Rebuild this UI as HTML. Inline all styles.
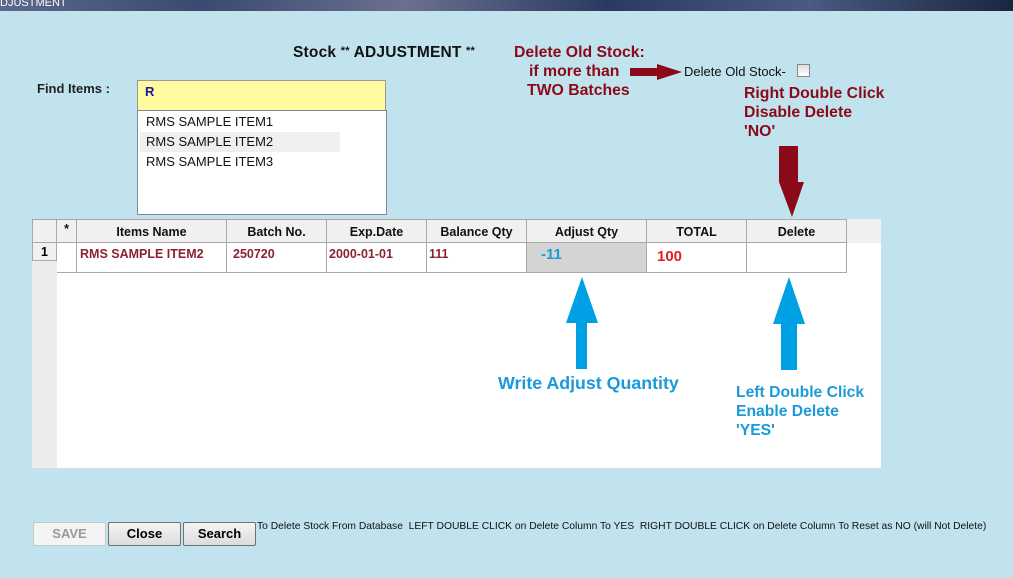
<!DOCTYPE html>
<html><head><style>
*{margin:0;padding:0;box-sizing:border-box}
body{width:1013px;height:578px;background:#c0e3ed;font-family:"Liberation Sans",Arial,sans-serif;position:relative;overflow:hidden}
.a{position:absolute;white-space:nowrap}
.tb{left:0;top:0;width:1013px;height:12px;background:linear-gradient(90deg,#5a6a8a,#3a4a70 20%,#6a7090 40%,#2a3a60 60%,#4a5a80 80%,#1a2540);border-bottom:1px solid #d0dde8}
.red{color:#8b0a1a;font-weight:bold;font-size:15.8px;line-height:19px}
.blue{color:#1a9ad8;font-weight:bold}
.cell{position:absolute;border-right:1px solid #a8a8a8;border-bottom:1px solid #a8a8a8;font-size:12.5px}
.h{top:219px;height:24px;background:#f0f0f0;font-weight:bold;text-align:center;line-height:24px;color:#111}
.d{top:243px;height:30px;background:#fff;color:#8b2232;font-weight:bold;padding-left:6px;line-height:22px}
.btn{position:absolute;top:522px;height:24px;border:1px solid #707070;border-radius:2px;background:linear-gradient(#f4f4f4,#dcdcdc);font-weight:bold;font-size:13px;text-align:center;line-height:22px}
</style></head><body>
<div class="a tb"></div>
<div class="a" style="left:0;top:-3px;font-size:11px;color:#fff">DJUSTMENT</div>
<div class="a" style="left:293px;top:44px;font-size:15.5px;font-weight:bold;color:#111;letter-spacing:0.2px">Stock <span style="font-size:11px;vertical-align:3px">**</span> ADJUSTMENT <span style="font-size:11px;vertical-align:3px">**</span></div>
<div class="a red" style="left:514px;top:43px">Delete Old Stock:</div>
<div class="a red" style="left:529px;top:62px">if more than</div>
<div class="a red" style="left:527px;top:81px">TWO Batches</div>
<svg class="a" style="left:628px;top:62px" width="56" height="20"><path d="M2 6h27v-4l25 8-25 8v-4H2z" fill="#8b0a1a"/></svg>
<div class="a" style="left:684px;top:64px;font-size:13px;color:#111">Delete Old Stock-</div>
<div class="a" style="left:797px;top:64px;width:13px;height:13px;border:1px solid #888;background:linear-gradient(#ddd,#fff)"></div>
<div class="a red" style="left:744px;top:84px">Right Double Click</div>
<div class="a red" style="left:744px;top:103px">Disable Delete</div>
<div class="a red" style="left:744px;top:122px">'NO'</div>
<svg class="a" style="left:778px;top:146px" width="28" height="72"><path d="M1 0h19v36h6l-12 35L1 36z" fill="#8b0a1a"/></svg>
<div class="a" style="left:37px;top:81px;font-size:13px;font-weight:bold;color:#222">Find Items :</div>
<div class="a" style="left:137px;top:80px;width:249px;height:30px;background:#fffaa0;border:1px solid #999;border-bottom:none"></div>
<div class="a" style="left:145px;top:84px;font-size:13px;font-weight:bold;color:#1a1a90">R</div>
<div class="a" style="left:137px;top:110px;width:250px;height:105px;background:#fff;border:1px solid #7a8a9a"></div>
<div class="a" style="left:140px;top:132px;width:200px;height:20px;background:#efefef"></div>
<div class="a" style="left:146px;top:112px;font-size:13px;color:#111;line-height:20px">RMS SAMPLE ITEM1<br>RMS SAMPLE ITEM2<br>RMS SAMPLE ITEM3</div>
<div class="a" style="left:32px;top:219px;width:849px;height:249px;background:#fff"></div>
<div class="a" style="left:32px;top:219px;width:849px;height:24px;background:#f0f0f0"></div>
<div class="a" style="left:32px;top:243px;width:25px;height:225px;background:#ececec"></div>
<div class="cell h" style="left:32px;width:25px;border-left:1px solid #a8a8a8;border-top:1px solid #a8a8a8"></div>
<div class="cell h" style="left:57px;width:20px;border-top:1px solid #a8a8a8;line-height:18px">*</div>
<div class="cell h" style="left:77px;width:150px;border-top:1px solid #a8a8a8">Items Name</div>
<div class="cell h" style="left:227px;width:100px;border-top:1px solid #a8a8a8">Batch No.</div>
<div class="cell h" style="left:327px;width:100px;border-top:1px solid #a8a8a8">Exp.Date</div>
<div class="cell h" style="left:427px;width:100px;border-top:1px solid #a8a8a8">Balance Qty</div>
<div class="cell h" style="left:527px;width:120px;border-top:1px solid #a8a8a8">Adjust Qty</div>
<div class="cell h" style="left:647px;width:100px;border-top:1px solid #a8a8a8">TOTAL</div>
<div class="cell h" style="left:747px;width:100px;border-top:1px solid #a8a8a8">Delete</div>
<div class="cell" style="left:32px;top:243px;width:25px;height:18px;background:#f0f0f0;border-left:1px solid #a8a8a8;font-weight:bold;text-align:center;line-height:18px">1</div>
<div class="cell d" style="left:57px;width:20px"></div>
<div class="cell d" style="left:77px;width:150px;padding-left:3px">RMS SAMPLE ITEM2</div>
<div class="cell d" style="left:227px;width:100px">250720</div>
<div class="cell d" style="left:327px;width:100px;padding-left:2px">2000-01-01</div>
<div class="cell d" style="left:427px;width:100px;padding-left:2px">111</div>
<div class="cell d" style="left:527px;width:120px;background:#d4d4d4;color:#1a9ad8;font-size:15px;padding-left:14px;line-height:24px">-11</div>
<div class="cell d" style="left:647px;width:100px;color:#e02020;font-size:15px;padding-left:10px;line-height:28px">100</div>
<div class="cell d" style="left:747px;width:100px"></div>
<svg class="a" style="left:565px;top:276px" width="36" height="96"><path d="M17 1L33 47h-11v46H11V47H1z" fill="#00a0e4"/></svg>
<svg class="a" style="left:771px;top:276px" width="36" height="96"><path d="M18 1L34 48h-8v46H10V48H2z" fill="#00a0e4"/></svg>
<div class="a blue" style="left:498px;top:373px;font-size:17.8px">Write Adjust Quantity</div>
<div class="a blue" style="left:736px;top:383px;font-size:15.7px;line-height:19px">Left Double Click<br>Enable Delete<br>'YES'</div>
<div class="btn" style="left:33px;width:73px;color:#999;border-color:#c8c8c8;background:#f4f4f4">SAVE</div>
<div class="btn" style="left:108px;width:73px">Close</div>
<div class="btn" style="left:183px;width:73px">Search</div>
<div class="a" style="left:257px;top:521px;font-size:10.3px;color:#111">To Delete Stock From Database&nbsp; LEFT DOUBLE CLICK on Delete Column To YES&nbsp; RIGHT DOUBLE CLICK on Delete Column To Reset as NO (will Not Delete)</div>
</body></html>
